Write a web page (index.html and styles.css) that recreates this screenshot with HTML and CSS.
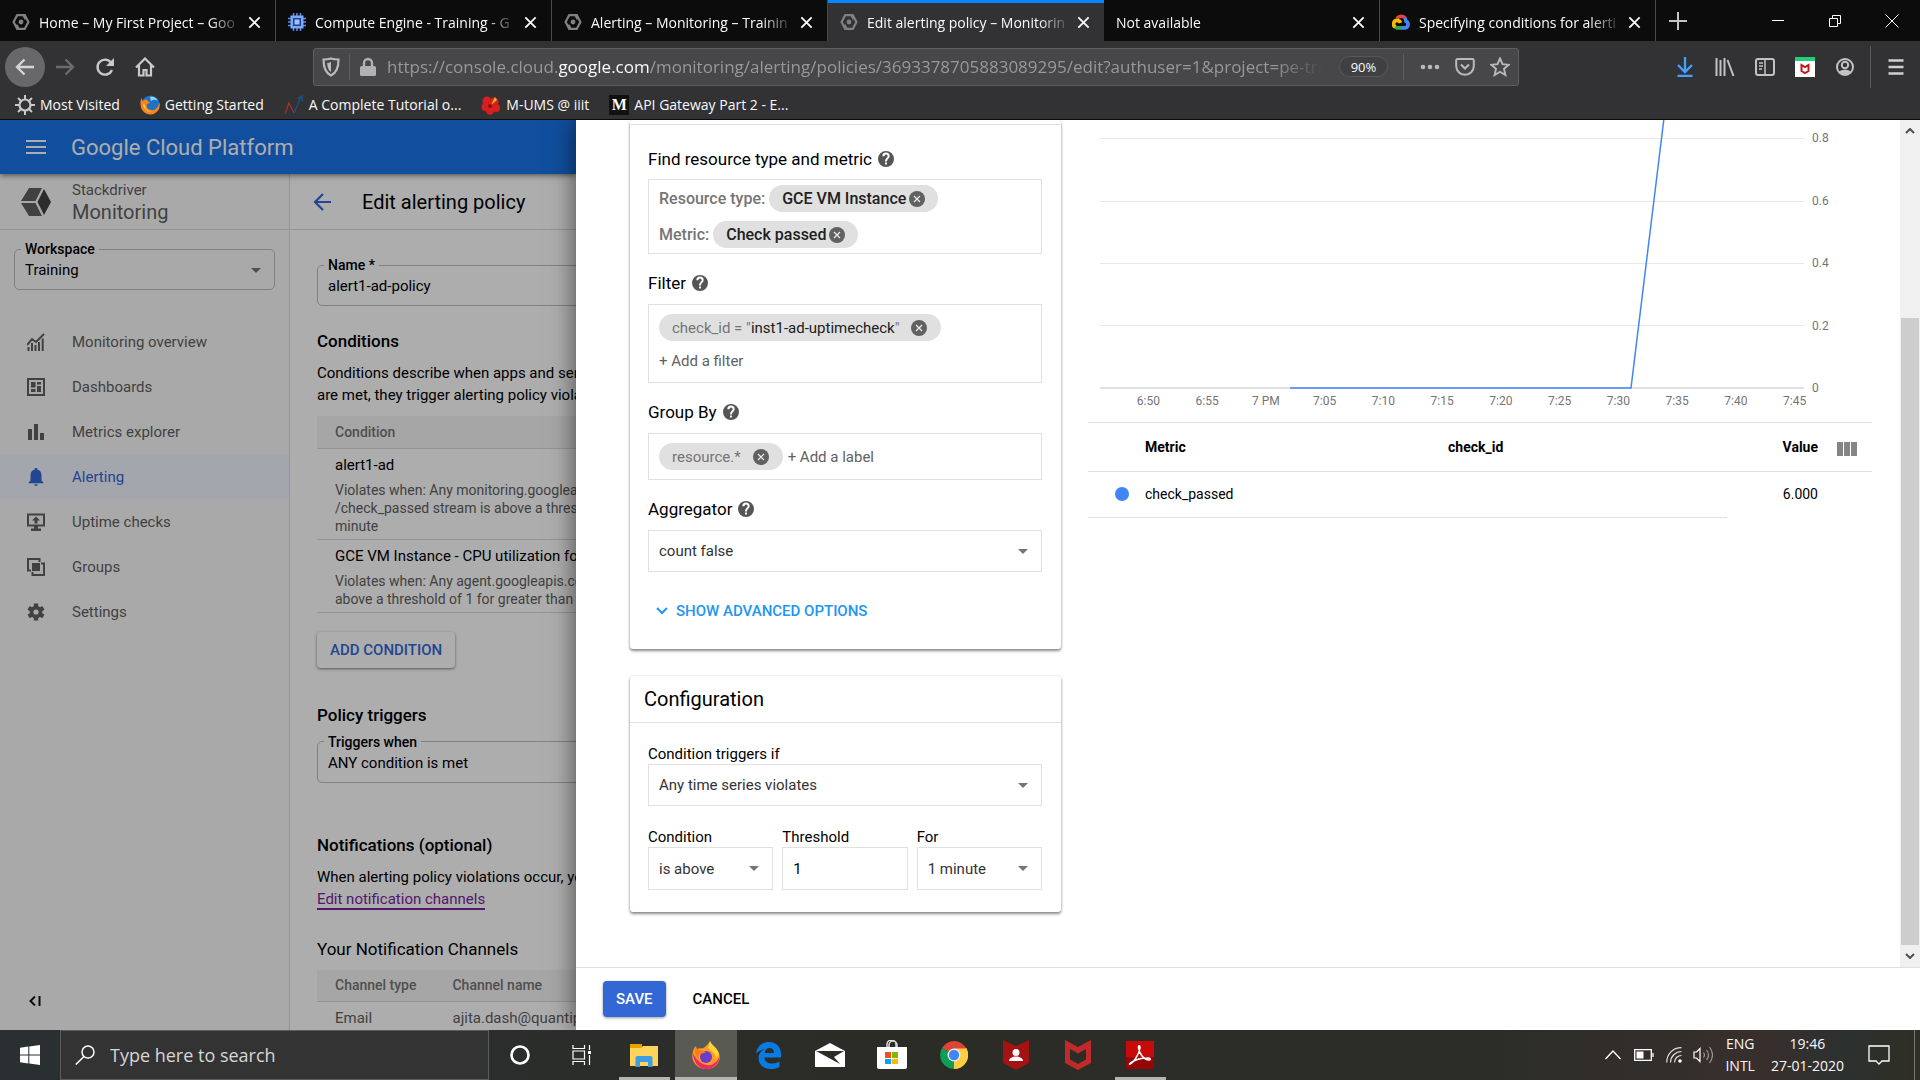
FILE: index.html
```html
<!DOCTYPE html>
<html lang="en">
<head>
<meta charset="utf-8">
<title>Edit alerting policy – Monitoring</title>
<link rel="stylesheet" href="styles.css">
</head>
<body>
<svg class="defs" aria-hidden="true">
  <symbol id="i-close" viewBox="0 0 16 16"><path d="M2.500 2.500l11 11M13.500 2.500l-11 11" stroke="currentColor" stroke-width="2" fill="none"/></symbol>
  <symbol id="i-hex" viewBox="0 0 18 18"><path d="M8 15.800H5.200L1.600 9l3.600-6.800h6.300l2 4M10 2.200h2.800L16.400 9l-3.600 6.800H6.500l-2-4" stroke="#808080" stroke-width="2.200" fill="none"/><circle cx="9" cy="9" r="2.400" fill="#808080"/></symbol>
  <symbol id="i-help" viewBox="0 0 24 24"><path fill="#555" d="M12 0a12 12 0 100 24 12 12 0 000-24zm1.400 20.200h-2.900v-2.800h2.900zm2.900-9.600l-1.200 1.300c-1 1-1.600 1.900-1.600 3.900h-3v-.8c0-1.500.6-2.900 1.600-3.900l1.600-1.700c.5-.4.800-1 .8-1.700a2.400 2.400 0 00-4.800 0H6.500a5.500 5.500 0 0111 0c0 1.100-.5 2.100-1.200 2.900z"/></symbol>
  <symbol id="i-remove" viewBox="0 0 16 16"><circle cx="8" cy="8" r="8" fill="#616161"/><path d="M5 5l6 6M11 5l-6 6" stroke="#eee" stroke-width="1.200"/></symbol>
  <symbol id="i-drop" viewBox="0 0 10 5"><path d="M0 0h10L5 5z" fill="#757575"/></symbol>
</svg>

<header class="browser">
  <div class="tabs">
    <div class="tab"><svg class="fav"><use href="#i-hex"/></svg><span class="tab-title">Home – My First Project – Goo</span><button class="x" aria-label="Close tab"><svg><use href="#i-close"/></svg></button></div>
    <div class="tab"><svg class="fav" viewBox="0 0 18 18"><path d="M5.500 0v18M9 0v18M12.500 0v18M0 5.500h18M0 9h18M0 12.500h18" stroke="#5b8def" stroke-width="1.500"/><rect x="2.500" y="2.500" width="13" height="13" fill="#7baaf7"/><rect x="5" y="5" width="8" height="8" fill="#1c3f94"/><rect x="6.500" y="6.500" width="5" height="5" fill="#a1c2fa"/></svg><span class="tab-title">Compute Engine - Training - G</span><button class="x" aria-label="Close tab"><svg><use href="#i-close"/></svg></button></div>
    <div class="tab"><svg class="fav"><use href="#i-hex"/></svg><span class="tab-title">Alerting – Monitoring – Trainin</span><button class="x" aria-label="Close tab"><svg><use href="#i-close"/></svg></button></div>
    <div class="tab active"><svg class="fav"><use href="#i-hex"/></svg><span class="tab-title">Edit alerting policy – Monitorin</span><button class="x" aria-label="Close tab"><svg><use href="#i-close"/></svg></button></div>
    <div class="tab"><span class="tab-title">Not available</span><button class="x" aria-label="Close tab"><svg><use href="#i-close"/></svg></button></div>
    <div class="tab"><svg class="fav" viewBox="0 0 20 18"><path d="M5.500 5A6 6 0 0115 5" fill="none" stroke="#ea4335" stroke-width="4"/><path d="M14 4.500c1 1 1.300 2 1.400 3.500a4 4 0 01-.4 7.500H10" fill="none" stroke="#4285f4" stroke-width="4"/><path d="M10.500 15.500H5.500L3 14" fill="none" stroke="#34a853" stroke-width="4"/><path d="M3.500 14.500a4 4 0 012-7.300c2 0 3.300 1 4 2.800" fill="none" stroke="#fbbc05" stroke-width="4"/></svg><span class="tab-title">Specifying conditions for alerti</span><button class="x" aria-label="Close tab"><svg><use href="#i-close"/></svg></button></div>
    <button class="new-tab" aria-label="New tab"><svg viewBox="0 0 18 18"><path d="M9 0v18M0 9h18" stroke="#c4c4c5" stroke-width="2"/></svg></button>
    <div class="win-controls">
      <button aria-label="Minimize"><svg viewBox="0 0 14 14"><path d="M1 6.500h12" stroke="#fff"/></svg></button>
      <button aria-label="Restore"><svg viewBox="0 0 14 14"><path d="M1.500 4.500h8v8h-8zM4.500 4V1.500h8v8H10" stroke="#fff" fill="none"/></svg></button>
      <button aria-label="Close"><svg viewBox="0 0 14 14"><path d="M.5.5l13 13M13.500.5l-13 13" stroke="#fff"/></svg></button>
    </div>
  </div>

  <div class="toolbar">
    <div class="nav-buttons">
      <button class="back" aria-label="Back"><svg viewBox="0 0 20 20"><path d="M19 10H2M9.500 2.500L2 10l7.500 7.500" fill="none" stroke="#d5d5d6" stroke-width="2.400"/></svg></button>
      <button aria-label="Forward"><svg viewBox="0 0 20 20"><path d="M1 10h17M10.500 2.500L18 10l-7.500 7.500" fill="none" stroke="#6b6b6d" stroke-width="2.400"/></svg></button>
      <button aria-label="Reload"><svg viewBox="0 0 20 20"><path d="M16 5.500A7.500 7.500 0 1017 13" fill="none" stroke="#c9c9ca" stroke-width="2.400"/><path d="M19 1v8h-8z" fill="#c9c9ca"/></svg></button>
      <button aria-label="Home"><svg viewBox="0 0 20 20"><path d="M1 10.500L10 1.500l9 9M4 8v10.500h4.500V13h3v5.500H16V8" fill="none" stroke="#c9c9ca" stroke-width="2.200"/></svg></button>
    </div>
    <div class="urlbar">
      <svg class="u-icon" viewBox="0 0 18 20"><path d="M9 1.500c3 1 5.500 1 7.500 1 0 7-1 13-7.500 16C2.500 15.500 1.500 9.500 1.500 2.500c2 0 4.500 0 7.500-1z" fill="none" stroke="#bcbcbd" stroke-width="2.200"/><path d="M9 5v10C6.500 13.500 5.300 10 5.200 6 6.500 6 8 5.500 9 5z" fill="#bcbcbd"/></svg>
      <span class="u-sep"></span>
      <svg class="u-icon" viewBox="0 0 18 20"><rect x="1" y="9" width="16" height="10" rx="1.500" fill="#b1b1b3"/><path d="M5 9V6a4 4 0 018 0v3" fill="none" stroke="#b1b1b3" stroke-width="2.400"/></svg>
      <div class="url" role="textbox" aria-label="Address">https://console.cloud.<b>google.com</b>/monitoring/alerting/policies/3693378705883089295/edit?authuser=1&amp;project=pe-tra</div>
      <button class="zoom">90%</button>
      <span class="u-sep tall"></span>
      <div class="u-actions">
        <button aria-label="Page actions"><svg viewBox="0 0 20 20"><circle cx="3" cy="10" r="2.300" fill="#b9b9ba"/><circle cx="10" cy="10" r="2.300" fill="#b9b9ba"/><circle cx="17" cy="10" r="2.300" fill="#b9b9ba"/></svg></button>
        <button aria-label="Pocket"><svg viewBox="0 0 20 20"><path d="M2.500 2h15a1.300 1.300 0 011.300 1.300V9a8.800 8.800 0 01-17.600 0V3.300A1.300 1.300 0 012.500 2z" fill="none" stroke="#b9b9ba" stroke-width="2"/><path d="M6 7.500l4 4 4-4" fill="none" stroke="#b9b9ba" stroke-width="2.200"/></svg></button>
        <button aria-label="Bookmark"><svg viewBox="0 0 20 20"><path d="M10 1.500l2.500 5.700 6.200.6-4.700 4.100 1.400 6.100L10 14.800 4.600 18 6 11.900 1.300 7.800l6.200-.6z" fill="none" stroke="#b9b9ba" stroke-width="1.900"/></svg></button>
      </div>
    </div>
    <div class="ext">
      <button aria-label="Downloads"><svg viewBox="0 0 20 20"><path d="M10 0v14M3 8l7 7 7-7M2.500 18.800h15" fill="none" stroke="#45a1ff" stroke-width="2.300"/></svg></button>
      <button aria-label="Library"><svg viewBox="0 0 20 20"><path d="M1.500 1v18M5.500 3v16M9.500 1v18M12.500 3l6 16" fill="none" stroke="#c2c2c3" stroke-width="2"/></svg></button>
      <button aria-label="Sidebars"><svg viewBox="0 0 20 20"><rect x="1" y="2" width="18" height="16" rx="2" fill="none" stroke="#c2c2c3" stroke-width="2"/><path d="M10 2v16M4 6h4M4 9h4M4 12h3" stroke="#c2c2c3" stroke-width="1.500"/></svg></button>
      <button aria-label="McAfee"><svg viewBox="0 0 20 20"><path fill="#fff" d="M0 0h20v20H0z"/><path fill="#1ed07a" d="M0 0h20v4H0z"/><path d="M6.500 8v6L10 16l3.500-2V8L10 10z" fill="none" stroke="#c01818" stroke-width="2"/></svg></button>
      <button aria-label="Account"><svg viewBox="0 0 20 20"><circle cx="10" cy="10" r="8" fill="none" stroke="#c2c2c3" stroke-width="2"/><circle cx="10" cy="8" r="3.200" fill="none" stroke="#c2c2c3" stroke-width="2"/><path d="M4 14.500c3-2.500 9-2.500 12 0-3 4-9 4-12 0z" fill="#c2c2c3"/></svg></button>
      <span class="ext-sep"></span>
      <button aria-label="Menu"><svg viewBox="0 0 20 20"><path d="M2.500 3.500h15M2.500 10h15M2.500 16.500h15" stroke="#d0d0d1" stroke-width="2.300"/></svg></button>
    </div>
  </div>

  <nav class="bookmarks">
    <a href="#"><svg viewBox="0 0 20 20"><circle cx="10" cy="10" r="5.500" fill="none" stroke="#c9c9ca" stroke-width="2.200"/><path d="M10 0v4M10 16v4M0 10h4M16 10h4M3 3l2.800 2.800M14.200 14.200L17 17M17 3l-2.800 2.800M5.800 14.200L3 17" stroke="#c9c9ca" stroke-width="2"/></svg>Most Visited</a>
    <a href="#"><svg viewBox="0 0 20 20"><circle cx="10.500" cy="9.500" r="9" fill="#1f72c4"/><path d="M10 2c3-1 7 1 8 4-3-2-5-1-7 0z" fill="#8fd6f2"/><path d="M1.500 3C0 6 0 12 2.500 15.500 7 21.500 16 20.500 19 14c1-3 1-5 .3-7-.3 5-4 9-8.300 8-4-.8-5-4-4-6l3-1-3-3c-2-.5-3.500.5-4.500 1z" fill="#f5851f"/><path d="M3 9c.5 5 5 9 10 8-6 0-8-4-8-7z" fill="#ffcf3f"/></svg>Getting Started</a>
    <a href="#"><svg viewBox="0 0 20 20"><path d="M1 19l4-11 5 10" fill="none" stroke="#a8322b" stroke-width="1.200"/><path d="M10 18l7-16M13.500 3.500L18 1l.5 5" fill="none" stroke="#1f4e79" stroke-width="1.500"/></svg>A Complete Tutorial o...</a>
    <a href="#"><svg viewBox="0 0 20 20"><g fill="#d81e1e"><circle cx="6" cy="6" r="4.500"/><circle cx="13" cy="7" r="4.500"/><circle cx="15" cy="13" r="4"/><circle cx="9" cy="15.500" r="4.200"/><circle cx="4.500" cy="12" r="4"/></g><path d="M10 10l4-8 2 3z" fill="#f2b01e"/><circle cx="9" cy="11" r="2" fill="#8e0d0d"/></svg>M-UMS @ iiit</a>
    <a href="#"><span class="m-icon">M</span>API Gateway Part 2 - E...</a>
  </nav>
</header>

<main class="viewport">
  <div class="console">
    <div class="gcp-bar"><svg class="burger" viewBox="0 0 20 14"><path d="M0 1h20M0 7h20M0 13h20" stroke="#fff" stroke-width="2"/></svg><span class="brand">Google Cloud Platform</span></div>
    <div class="console-body">
      <aside class="side">
        <div class="product">
          <svg viewBox="0 0 30 28"><path d="M8 0h13l-6.500 13H0zM0 15h14.500L21 28H8z" fill="#616161"/><path d="M23 1l7 13-7 13-6.500-13z" fill="#424242"/></svg>
          <div><div class="p-small">Stackdriver</div><div class="p-big">Monitoring</div></div>
        </div>
        <fieldset class="field ws"><legend><label for="ws">Workspace</label></legend><div class="pick"><select id="ws"><option>Training</option></select><svg><use href="#i-drop"/></svg></div></fieldset>
        <nav class="menu">
          <a href="#"><svg viewBox="0 0 18 18"><path d="M0 12l5-6 4 3 8-8M1.500 18v-4M5 18v-8M8.500 18v-6M12 18V9M15.700 18V5.500" fill="none" stroke="#616161" stroke-width="2"/></svg>Monitoring overview</a>
          <a href="#"><svg viewBox="0 0 18 18"><path d="M1 1h16v16H1z" fill="none" stroke="#616161" stroke-width="2"/><path d="M4 4h4.500v5.500H4zM10 4h4v2.500h-4zM4 11h4.500v3H4zM10 8h4v6h-4z" fill="#616161"/></svg>Dashboards</a>
          <a href="#"><svg viewBox="0 0 18 18"><path d="M1 6h4v11H1zM7 1h4v16H7zM13 10h4v7h-4z" fill="#616161"/></svg>Metrics explorer</a>
          <a href="#" class="on"><svg viewBox="0 0 18 18"><path d="M9 0a1.300 1.300 0 011.300 1.600C13 2.300 14.500 4.500 14.500 7.500v5l2 2v.8h-15v-.8l2-2v-5c0-3 1.500-5.200 4.200-5.900A1.300 1.300 0 019 0zM7.200 16.200h3.600a1.800 1.800 0 01-3.600 0z" fill="#3367d6"/></svg>Alerting</a>
          <a href="#"><svg viewBox="0 0 18 18"><path d="M1 1.500h16v11H1z" fill="none" stroke="#616161" stroke-width="2"/><path d="M9 3.500l4 4h-2.500v3h-3v-3H5zM7 13h4v2.500h3V18H4v-2.500h3z" fill="#616161"/></svg>Uptime checks</a>
          <a href="#"><svg viewBox="0 0 18 18"><path d="M4 12.500H1V1h11.500v3M14 5.500h3V17H5.500v-3" fill="none" stroke="#616161" stroke-width="2"/><path d="M5 5h8v8H5z" fill="#616161"/></svg>Groups</a>
          <a href="#"><svg viewBox="0 0 18 18"><path d="M9 .5v17M1.600 4.800l14.800 8.500M1.600 13.300l14.800-8.500" stroke="#616161" stroke-width="4.400"/><circle cx="9" cy="9" r="6.300" fill="#616161"/><circle cx="9" cy="9" r="2.600" fill="#fafafa"/></svg>Settings</a>
        </nav>
        <button class="collapse" aria-label="Collapse menu"><svg viewBox="0 0 12 10"><path d="M6 0.500L1.500 5 6 9.500M10.500 0v10" fill="none" stroke="#111" stroke-width="2"/></svg></button>
      </aside>
      <section class="policy">
        <div class="policy-head"><svg viewBox="0 0 18 18"><path d="M18 9H2M10 1L2 9l8 8" fill="none" stroke="#3367d6" stroke-width="2.200"/></svg><h1>Edit alerting policy</h1></div>
        <div class="policy-body">
          <fieldset class="field name"><legend><label for="nm">Name *</label></legend><input id="nm" value="alert1-ad-policy"></fieldset>
          <h2 class="h-cond">Conditions</h2>
          <p class="copy">Conditions describe when apps and serv<br>are met, they trigger alerting policy viola</p>
          <table class="grid">
            <thead><tr><th>Condition</th></tr></thead>
            <tbody>
              <tr><td><div class="c-name">alert1-ad</div><div class="c-desc">Violates when: Any monitoring.googleap<br>/check_passed stream is above a thresh<br>minute</div></td></tr>
              <tr><td><div class="c-name">GCE VM Instance - CPU utilization for</div><div class="c-desc">Violates when: Any agent.googleapis.co<br>above a threshold of 1 for greater than 1</div></td></tr>
            </tbody>
          </table>
          <button class="add">ADD CONDITION</button>
          <h2 class="h-trig">Policy triggers</h2>
          <fieldset class="field trig"><legend><label for="tr">Triggers when</label></legend><select id="tr"><option>ANY condition is met</option></select></fieldset>
          <h2 class="h-notif">Notifications (optional)</h2>
          <p class="copy">When alerting policy violations occur, yo<br><a href="#" class="visited">Edit notification channels</a></p>
          <h3>Your Notification Channels</h3>
          <table class="grid channels">
            <thead><tr><th class="c-type">Channel type</th><th>Channel name</th></tr></thead>
            <tbody><tr><td>Email</td><td>ajita.dash@quantip</td></tr></tbody>
          </table>
        </div>
      </section>
    </div>
  </div>

  <section class="drawer">
    <div class="scroller">
      <div class="content">
        <form class="forms">
          <div class="card target">
            <div class="card-edge"></div>
            <div class="card-body">
              <h4>Find resource type and metric <svg><use href="#i-help"/></svg></h4>
              <div class="box res">
                <div class="line"><span>Resource type:</span><span class="pill strong">GCE VM Instance<button type="button" aria-label="Remove"><svg><use href="#i-remove"/></svg></button></span></div>
                <div class="line"><span>Metric:</span><span class="pill strong">Check passed<button type="button" aria-label="Remove"><svg><use href="#i-remove"/></svg></button></span></div>
              </div>
              <h4>Filter <svg><use href="#i-help"/></svg></h4>
              <div class="box filter">
                <span class="pill loose"><span>check_id = "<b>inst1-ad-uptimecheck</b>"</span><button type="button" aria-label="Remove"><svg><use href="#i-remove"/></svg></button></span>
                <button type="button" class="plain">+ Add a filter</button>
              </div>
              <h4>Group By <svg><use href="#i-help"/></svg></h4>
              <div class="box group">
                <span class="pill loose">resource.*<button type="button" aria-label="Remove"><svg><use href="#i-remove"/></svg></button></span>
                <button type="button" class="plain">+ Add a label</button>
              </div>
              <h4><label for="agg">Aggregator</label> <svg><use href="#i-help"/></svg></h4>
              <div class="pick boxed"><select id="agg"><option>count false</option></select><svg><use href="#i-drop"/></svg></div>
              <button type="button" class="advanced"><svg viewBox="0 0 12 8"><path d="M1 1l5 5 5-5" fill="none" stroke="#2196f3" stroke-width="2"/></svg>SHOW ADVANCED OPTIONS</button>
            </div>
          </div>
          <div class="card config">
            <h3 class="card-title">Configuration</h3>
            <div class="config-body">
              <label for="ct">Condition triggers if</label>
              <div class="pick boxed"><select id="ct"><option>Any time series violates</option></select><svg><use href="#i-drop"/></svg></div>
              <div class="trio">
                <div><label for="c1">Condition</label><div class="pick boxed"><select id="c1"><option>is above</option></select><svg><use href="#i-drop"/></svg></div></div>
                <div><label for="c2">Threshold</label><input id="c2" class="boxed-in" value="1"></div>
                <div><label for="c3">For</label><div class="pick boxed"><select id="c3"><option>1 minute</option></select><svg><use href="#i-drop"/></svg></div></div>
              </div>
            </div>
          </div>
        </form>
        <div class="results">
          <div class="chart">
            <svg class="plot" viewBox="0 0 704 270" preserveAspectRatio="none">
              <path d="M0 18.500h704M0 81.500h704M0 143.500h704M0 205.500h704" stroke="#e8e8e8" fill="none"/>
              <path d="M0 268h704" stroke="#e0e0e0" stroke-width="2"/>
              <path d="M190 268h341L564 -2" stroke="#4285f4" stroke-width="1.500" fill="none" vector-effect="non-scaling-stroke"/>
            </svg>
            <div class="y-axis"><span>0.8</span><span>0.6</span><span>0.4</span><span>0.2</span><span>0</span></div>
            <div class="x-axis"><span>6:50</span><span>6:55</span><span>7 PM</span><span>7:05</span><span>7:10</span><span>7:15</span><span>7:20</span><span>7:25</span><span>7:30</span><span>7:35</span><span>7:40</span><span>7:45</span></div>
          </div>
          <table class="series">
            <thead><tr><th class="s-dot"></th><th class="s-metric">Metric</th><th>check_id</th><th class="s-val">Value</th><th class="s-cols"><svg viewBox="0 0 20 14"><path d="M0 0h6v14H0zM7 0h6v14H7zM14 0h6v14h-6z" fill="#858585"/></svg></th></tr></thead>
            <tbody><tr><td><span class="dot"></span></td><td>check_passed</td><td></td><td class="s-val">6.000</td><td></td></tr></tbody>
          </table>
        </div>
      </div>
      <div class="bar"><svg viewBox="0 0 10 6"><path d="M1 5l4-4 4 4" fill="none" stroke="#505050" stroke-width="2"/></svg><div class="thumb"></div><svg viewBox="0 0 10 6"><path d="M1 1l4 4 4-4" fill="none" stroke="#505050" stroke-width="2"/></svg></div>
    </div>
    <div class="actions"><button class="save">SAVE</button><button class="cancel">CANCEL</button></div>
  </section>
</main>

<footer class="taskbar">
  <button class="start" aria-label="Start"><svg viewBox="0 0 20 20"><path d="M0 2.800l8.300-1.200v7.900H0zM9.300 1.500L20 0v9.500H9.300zM0 10.500h8.300v7.900L0 17.200zM9.300 10.500H20V20L9.300 18.500z" fill="#fff"/></svg></button>
  <label class="search"><svg viewBox="0 0 20 20"><circle cx="13" cy="7" r="6" fill="none" stroke="#fff" stroke-width="1.500"/><path d="M9 11.500L.8 19.500" stroke="#fff" stroke-width="1.500"/></svg><input placeholder="Type here to search" aria-label="Search"></label>
  <button class="app" aria-label="Cortana"><svg class="s20" viewBox="0 0 20 20"><circle cx="10" cy="10" r="8.500" fill="none" stroke="#fff" stroke-width="2.600"/></svg></button>
  <button class="app" aria-label="Task View"><svg class="s20" viewBox="0 0 20 20"><path d="M1 0v3.500h11.500V0M1 20v-3.500h11.500V20M1 6h11.500v8H1zM17.500 0v5M17.500 10v10" fill="none" stroke="#fff" stroke-width="1.200"/><path d="M16 6h3v3h-3z" fill="#fff"/></svg></button>
  <button class="app open" aria-label="File Explorer"><svg viewBox="0 0 28 28"><path d="M0 3h12v5H0z" fill="#e8a200"/><path d="M0 7h11l2-2h15v20H0z" fill="#ffd45c"/><path d="M5.500 26V17a2 2 0 012-2h13a2 2 0 012 2v9H18v-5h-8v5z" fill="#3f9ce0"/></svg></button>
  <button class="app open current" aria-label="Firefox"><svg viewBox="0 0 28 28"><path d="M18 0c1 4 8 7 9.500 14C29 22 22 28 14 28S-1 21 .5 13C1 9 2 7 4 5c0 2 .5 2.500 1 3 2-1 4-1 5-.5C12 7 16 4 18 0z" fill="#ff9a1f"/><path d="M1 12c0 9 6 16 13 16 8 0 13-6 13.500-12-3 6-8 9-13 8C8 23 4 18 1 12z" fill="#f3286b"/><path d="M18 0c1 4 8 7 9 13l-3 5c0-6-5-8-8-11z" fill="#ffd43b"/><circle cx="14" cy="16" r="6" fill="#6b3bd0"/><path d="M4 6c1 4 6 3 10 5-2 2-5 1-7 3-1 2 0 4 0 4-4-3-5-8-3-12z" fill="#ff7a1f"/></svg></button>
  <button class="app" aria-label="Edge"><svg viewBox="0 0 28 28"><path d="M2 12.500C3.500 4.500 8.500 1 15 1c7.500 0 12 5 12 12v3.500H10.500c.2 4 3.500 6 7.500 6 3 0 5.500-1 7.500-2v5.500c-2.500 1.500-5.500 2-8.500 2C9 28 4.500 23 4.500 17c0-4 2.500-7.500 6.500-9-4 .5-7 2.500-9 4.500zM10.700 12H20c0-3.500-1.800-5-4.600-5-2.600 0-4.300 2-4.700 5z" fill="#0a7be0"/></svg></button>
  <button class="app" aria-label="Mail"><svg class="s30" viewBox="0 0 30 26"><path d="M0 9L15 1l15 8v16H0z" fill="#fff"/><path d="M1 9h28L19 15l6 7L3 10z" fill="#2c2c27"/></svg></button>
  <button class="app" aria-label="Store"><svg class="s30" viewBox="0 0 30 30"><path d="M10 8V5a4.500 4.500 0 019-1v4M12 8V5a4 4 0 018 0v3" fill="none" stroke="#ddd" stroke-width="1.500"/><path d="M0 7h30v20a2 2 0 01-2 2H2a2 2 0 01-2-2z" fill="#fff"/><path d="M8 12h6v6H8z" fill="#f25022"/><path d="M15 12h6v6h-6z" fill="#7fba00"/><path d="M8 19h6v5H8z" fill="#00a4ef"/><path d="M15 19h6v5h-6z" fill="#ffb900"/></svg></button>
  <button class="app" aria-label="Chrome"><svg viewBox="0 0 28 28"><path d="M14 14L2 7a14 14 0 0124.200 0z" fill="#db4437"/><path d="M14 14l12.200-7A14 14 0 0114 28z" fill="#ffcd40"/><path d="M14 14v14A14 14 0 012 7z" fill="#0f9d58"/><path d="M14 7.500h12.400A14 14 0 0114 28l6-10.500z" fill="#ffcd40"/><circle cx="14" cy="14" r="6.500" fill="#f1f1f1"/><circle cx="14" cy="14" r="5.200" fill="#4285f4"/></svg></button>
  <button class="app" aria-label="McAfee Personal"><svg class="s30" viewBox="0 0 30 30"><path d="M2 0l13 6 13-6v23L15 30 2 23z" fill="#a31313"/><circle cx="15" cy="12.500" r="3.500" fill="#fff"/><path d="M8 21c0-6 14-6 14 0z" fill="#fff"/></svg></button>
  <button class="app" aria-label="McAfee"><svg class="s30" viewBox="0 0 30 30"><path d="M2 0l13 7 13-7v23l-13 7L2 23zM7 9v10.500L15 24l8-4.500V9l-8 4.500z" fill="#c12a2a" fill-rule="evenodd"/></svg></button>
  <button class="app open" aria-label="Acrobat"><svg viewBox="0 0 28 28"><path d="M0 0h28v28H0z" fill="#c80a0a"/><path d="M0 16h28v12H0z" fill="#960606"/><path d="M4 23c3-1 9-9 10-16 .3-3-2-3-1.500 0C13.500 13 18 19 23 19c2.500 0 1.500-2.500-2-2-5 0-11 1.500-15 4-2.500 1.500-3 2.500-2 2z" fill="none" stroke="#fff" stroke-width="1.500"/></svg></button>
  <div class="tray">
    <svg class="t-up" viewBox="0 0 16 10"><path d="M.5 9L8 1l7.500 8" fill="none" stroke="#fff" stroke-width="1.300"/></svg>
    <svg class="t-bat" viewBox="0 0 20 12"><path d="M.7.7h16.600v10.600H.7zM19 4v4" fill="none" stroke="#fff" stroke-width="1.300"/><path d="M2.500 2.500h7v7h-7z" fill="#fff"/></svg>
    <svg class="t-wifi" viewBox="0 0 16 16"><path d="M.7 15.500C.7 7 7 .7 15.500.7M4.500 15.500c0-6 5-11 11-11M8.500 15.500c0-4 3-7 7-7" fill="none" stroke="#e0e0e0" stroke-width="1.200"/><circle cx="14" cy="14" r="1.800" fill="#fff"/></svg>
    <svg class="t-vol" viewBox="0 0 20 18"><path d="M1 6h2.500L7 2.500v13L3.500 12H1z" fill="none" stroke="#fff" stroke-width="1.200"/><path d="M10.500 6.500q2 2.500 0 5M13.500 4q4 5 0 10M16.500 1q6 8 0 16" fill="none" stroke="#999" stroke-width="1.200"/></svg>
    <div class="lang">ENG<br>INTL</div>
    <div class="clock">19:46<br>27-01-2020</div>
    <svg class="t-note" viewBox="0 0 22 20"><path d="M1 1h20v15h-7l-3 3-3-3H1z" fill="none" stroke="#fff" stroke-width="1.300"/></svg>
    <span class="peek"></span>
  </div>
</footer>
</body>
</html>
```
FILE: styles.css
```css
* { box-sizing: border-box; }
body {
  margin: 0;
  height: 100vh;
  display: grid;
  grid-template-columns: minmax(0, 1fr);
  grid-template-rows: auto minmax(0, 1fr) auto;
  overflow: hidden;
  font-family: Roboto, "Liberation Sans", sans-serif;
  font-size: 15px;
  color: #000;
}
button, input, select { font: inherit; color: inherit; border: 0; padding: 0; margin: 0; background: none; outline: 0; }
select { appearance: none; }
button { display: inline-flex; align-items: center; justify-content: center; cursor: pointer; }
a { color: inherit; text-decoration: none; }
h1, h2, h3, h4, p { margin: 0; font-weight: 400; }
table { border-collapse: collapse; border-spacing: 0; }
.defs { position: absolute; width: 0; height: 0; }

/* browser chrome */
.browser, .taskbar { font-family: "Open Sans", "Noto Sans", sans-serif; color: #f9f9fa; }
.browser { background: #323234; border-bottom: 1px solid #0c0c0d; font-size: 14px; }
.tabs { display: flex; height: 41px; background: #0c0c0d; }
.tab { flex: 0 1 276px; min-width: 0; display: flex; align-items: center; padding: 3px 13px 0 12px; border-right: 1px solid #4a4a4c; }
.tab.active { background: #323234; border-top: 3px solid #0a84ff; padding-top: 0; border-right: 0; }
.fav { width: 18px; height: 18px; margin-right: 9px; flex: none; }
.tab-title { flex: 1; overflow: hidden; white-space: nowrap; mask-image: linear-gradient(to left, transparent, #000 32px); }
.x { width: 16px; flex: none; margin-left: 4px; }
.x svg { width: 15px; height: 15px; }
.new-tab { width: 44px; flex: none; }
.new-tab svg { width: 18px; height: 18px; }
.win-controls { margin-left: auto; display: flex; flex: none; }
.win-controls button { width: 57px; }
.win-controls svg { width: 14px; height: 14px; }

.toolbar { display: flex; align-items: center; height: 51px; padding: 0 6px 0 5px; }
.nav-buttons { display: flex; flex: none; width: 308px; }
.nav-buttons button { width: 40px; height: 40px; }
.nav-buttons svg, .u-actions svg, .ext svg { width: 20px; height: 20px; }
.nav-buttons .back { background: #68686a; border-radius: 50%; }
.urlbar { flex: 1; display: flex; align-items: center; height: 38px; padding: 0 8px; background: #474749; border: 1px solid #5f5f62; border-radius: 3px; min-width: 0; }
.u-icon { width: 18px; height: 20px; flex: none; }
.u-sep { width: 1px; height: 26px; background: #5f5f66; margin: 0 9px; flex: none; }
.url { flex: 1; min-width: 0; margin-left: 10px; overflow: hidden; white-space: nowrap; font-size: 17px; color: #98989a; mask-image: linear-gradient(to left, transparent, #000 50px); }
.url b { font-weight: 400; color: #f9f9fa; }
.zoom { width: 49px; height: 21px; margin-left: 16px; border: 1px solid #58585b; border-radius: 11px; background: #404042; font-size: 13px; flex: none; }
.u-sep.tall { margin: 0 16px 0 15px; }
.u-actions { display: flex; gap: 15px; flex: none; }
.ext { flex: none; display: flex; align-items: center; justify-content: flex-end; gap: 20px; width: 395px; padding-right: 8px; }
.ext-sep { width: 1px; height: 42px; background: #5a5a5c; margin: 0 -5px; }

.bookmarks { display: flex; align-items: center; gap: 20px; height: 27px; padding: 0 0 2px 15px; }
.bookmarks a { display: flex; align-items: center; gap: 5px; white-space: nowrap; }
.bookmarks svg { width: 20px; height: 20px; }
.m-icon { width: 20px; height: 20px; background: #111; text-align: center; font: bold 16px/20px "Liberation Serif", serif; color: #fff; }

/* console behind the drawer */
.viewport { display: grid; grid-template-columns: minmax(0, 3fr) minmax(0, 7fr); min-height: 0; overflow: hidden; }
.console { position: relative; min-width: 0; display: flex; flex-direction: column; overflow: hidden; background: #fff; white-space: nowrap; }
.console::after { content: ""; position: absolute; inset: 0; z-index: 2; background: rgba(0, 0, 0, .32); }
.gcp-bar { height: 54px; flex: none; display: flex; align-items: center; gap: 25px; padding-left: 26px; background: #1a73e8; box-shadow: 0 1px 6px rgba(0, 0, 0, .6); z-index: 1; color: #fff; }
.burger { width: 20px; height: 14px; }
.brand { font-size: 22px; }
.console-body { flex: 1; min-height: 0; display: flex; }
.side { width: 290px; flex: none; display: flex; flex-direction: column; background: #fafafa; border-right: 1px solid #dadada; color: #616161; }
.product { height: 56px; flex: none; display: flex; align-items: center; gap: 21px; padding-left: 21px; border-bottom: 1px solid #dadada; }
.product svg { width: 30px; height: 28px; }
.p-small { line-height: 20px; }
.p-big { font-size: 20px; line-height: 24px; }
.field { min-width: 0; height: 49px; margin: 0; padding: 0 10px; border: 1px solid #bdbdbd; border-radius: 5px; color: #000; }
.field legend { padding: 0 4px; margin-left: -4px; font-size: 14px; font-weight: 500; line-height: 16px; }
.field input, .field select { display: block; width: 100%; height: 26px; }
.ws { margin: 11px 14px 0; flex: none; }
.pick { display: grid; align-items: center; }
.pick > * { grid-area: 1 / 1; }
.pick svg { width: 10px; height: 5px; justify-self: end; margin-right: 3px; pointer-events: none; }
.menu { margin-top: 29px; }
.menu a { display: flex; align-items: center; height: 45px; padding-left: 27px; gap: 27px; }
.menu svg { width: 18px; height: 18px; }
.menu .on { background: #f1f5ff; color: #3367d6; }
.collapse { margin: auto 0 24px 29px; align-self: flex-start; }
.collapse svg { width: 12px; height: 10px; }

.policy { flex: 1; min-width: 0; overflow: hidden; }
.policy-head { height: 56px; display: flex; align-items: center; gap: 31px; padding-left: 23px; border-bottom: 1px solid #dadada; }
.policy-head svg { width: 18px; height: 18px; }
h1 { font-size: 20px; }
.policy-body { width: 900px; padding-left: 27px; }
.name { margin-top: 27px; }
.policy h2 { font-size: 17px; font-weight: 500; line-height: 22px; }
.policy h3 { font-size: 17px; line-height: 22px; margin: 28px 0 10px; }
.h-cond { margin-top: 24px; }
.copy { line-height: 22px; margin: 10px 0; }
.grid { width: 100%; }
.grid th { height: 32px; padding: 0 18px; background: #f5f5f5; border-bottom: 1px solid #dadada; text-align: left; font-size: 14px; font-weight: 500; color: #757575; }
.grid td { padding: 5px 18px 4px; border-bottom: 1px solid #dadada; line-height: 22px; }
.c-desc { margin-top: 5px; font-size: 14px; line-height: 18px; color: #616161; }
.c-type { width: 114px; }
.channels td { color: #616161; }
.add { height: 36px; margin-top: 19px; padding: 0 13px; border-radius: 4px; background: #fff; box-shadow: 0 1px 3px rgba(0, 0, 0, .5); color: #3367d6; font-weight: 500; }
.h-trig { margin-top: 36px; }
.trig { margin-top: 8px; }
.h-notif { margin-top: 51px; }
.visited { color: #7b1fa2; border-bottom: 2px solid #7b1fa2; }

/* condition drawer */
.drawer { position: relative; z-index: 3; min-width: 0; display: flex; flex-direction: column; background: #fff; box-shadow: 0 0 24px rgba(0, 0, 0, .6); }
.scroller { flex: 1; min-height: 0; display: flex; border-bottom: 1px solid #e0e0e0; }
.content { flex: 1; min-width: 0; overflow: hidden; display: grid; grid-template-columns: 431px minmax(0, 1fr); gap: 27px; align-items: start; padding: 0 28px 0 54px; }
.forms { display: grid; gap: 27px; }
.card { border-radius: 3px; box-shadow: 0 2px 3px rgba(0, 0, 0, .45), 0 0 2px rgba(0, 0, 0, .15); }
.card-edge { height: 5px; border-bottom: 1px solid #e0e0e0; }
.card-body { padding: 23px 19px 27px 18px; }
h4 { display: flex; align-items: center; gap: 6px; font-size: 17px; line-height: 22px; margin: 18px 0 10px; }
h4:first-child { margin: 0 0 9px; }
h4 svg, .pill svg { width: 16px; height: 16px; }
.box { border: 1px solid #e0e0e0; padding: 5px 10px; color: #616161; }
.res { display: grid; gap: 9px; color: #757575; font-size: 16px; font-weight: 500; }
.line { display: flex; align-items: center; gap: 4px; height: 27px; }
.pill { display: inline-flex; align-items: center; height: 27px; padding: 0 13px; border-radius: 14px; background: #e0e0e0; color: #757575; gap: 3px; }
.pill.strong { color: #212121; }
.pill.loose { gap: 12px; padding-right: 14px; }
.pill b { font-weight: 400; color: #212121; }
.filter { display: grid; justify-items: start; gap: 9px; padding: 9px 10px 10px; }
.plain { line-height: 22px; }
.group { display: flex; align-items: center; gap: 5px; height: 47px; }
.boxed { border: 1px solid #e0e0e0; height: 42px; }
.boxed select { width: 100%; height: 40px; padding: 0 10px; color: #333; }
.boxed svg { margin-right: 13px; }
.advanced { margin: 28px 0 0 8px; gap: 8px; line-height: 22px; font-weight: 500; color: #2196f3; }
.advanced svg { width: 12px; height: 8px; }
.card-title { height: 47px; padding-left: 14px; line-height: 46px; font-size: 20px; border-bottom: 1px solid #e0e0e0; }
.config-body { padding: 21px 19px 22px 18px; }
.config-body label { display: block; line-height: 20px; }
.trio { display: grid; grid-template-columns: repeat(3, 1fr); gap: 9px; margin-top: 21px; }
.trio .boxed, .boxed-in { height: 43px; }
.boxed-in { display: block; width: 100%; padding: 0 10px; border: 1px solid #e0e0e0; }

.chart { display: grid; grid-template-columns: minmax(0, 1fr) 60px; column-gap: 8px; padding-left: 12px; font-size: 12px; line-height: 14px; color: #757575; }
.plot { width: 100%; height: 270px; display: block; }
.y-axis { display: flex; flex-direction: column; justify-content: space-between; padding-top: 11px; margin-bottom: -5px; }
.x-axis { display: grid; grid-template-columns: repeat(12, 1fr); margin: 4px -20px 14px 19px; text-align: center; }
.series { width: 100%; table-layout: fixed; border-top: 1px solid #e0e0e0; font-size: 14px; }
.series th { height: 49px; padding: 0; text-align: left; font-weight: 700; border-bottom: 1px solid #e0e0e0; }
.series td { height: 46px; padding: 0 0 1px; }
.series td:nth-child(-n+3) { border-bottom: 1px solid #e0e0e0; }
.s-dot { width: 57px; }
.s-metric { width: 303px; }
.series .s-val { width: 91px; text-align: right; }
.series .s-cols { width: 54px; padding-left: 19px; }
.s-cols svg { width: 20px; height: 14px; display: block; margin-top: 4px; }
.dot { display: block; width: 14px; height: 14px; margin-left: 27px; border-radius: 50%; background: #4285f4; }

.bar { width: 20px; flex: none; display: flex; flex-direction: column; align-items: center; background: #f0f0f0; padding: 8px 0; }
.bar svg { width: 10px; height: 6px; flex: none; }
.thumb { width: 18px; flex: 1; margin: 184px 0 8px; background: #cdcdcd; }
.actions { height: 62px; flex: none; display: flex; align-items: center; gap: 27px; padding: 0 27px; font-weight: 500; }
.save { height: 36px; padding: 0 13px; border-radius: 4px; background: #3367d6; color: #fff; box-shadow: 0 1px 3px rgba(0, 0, 0, .4); }

/* taskbar */
.taskbar { display: flex; height: 50px; background: linear-gradient(90deg, #2a2f31 0, #2a2f31 8%, #2c2c27 45%, #2c2d29 78%, #382f2c 92%, #2c3130 96%, #2f2f23 100%); }
.start { width: 60px; flex: none; }
.start svg, .search svg { width: 20px; height: 20px; flex: none; }
.search { width: 429px; flex: none; display: flex; align-items: center; gap: 15px; padding-left: 14px; background: #333; border: 1px solid #5c5c5c; }
.search input { flex: 1; font-size: 18px; }
.search input::placeholder { color: #d6d6d6; opacity: 1; }
.app { width: 62px; flex: none; padding: 0; }
.app svg { width: 28px; height: 28px; }
.app .s20 { width: 20px; height: 20px; }
.app .s30 { width: 30px; height: 30px; }
.app.open { background: linear-gradient(#b5b5b0, #b5b5b0) center bottom / 51px 3px no-repeat; }
.app.current { background: linear-gradient(#b5b5b0, #b5b5b0) center bottom / 100% 3px no-repeat, #5a5a55; }
.tray { margin-left: auto; flex: none; display: flex; align-items: center; font-size: 14px; line-height: 22px; text-align: center; }
.t-up { width: 16px; height: 10px; margin-right: 13px; }
.t-bat { width: 20px; height: 12px; margin-right: 12px; }
.t-wifi { width: 16px; height: 16px; margin-right: 11px; }
.t-vol { width: 20px; height: 18px; margin-right: 12px; }
.lang { margin-right: 16px; }
.t-note { width: 22px; height: 20px; margin: 0 24px; }
.peek { width: 1px; height: 50px; margin-right: 5px; background: #777; }
```
